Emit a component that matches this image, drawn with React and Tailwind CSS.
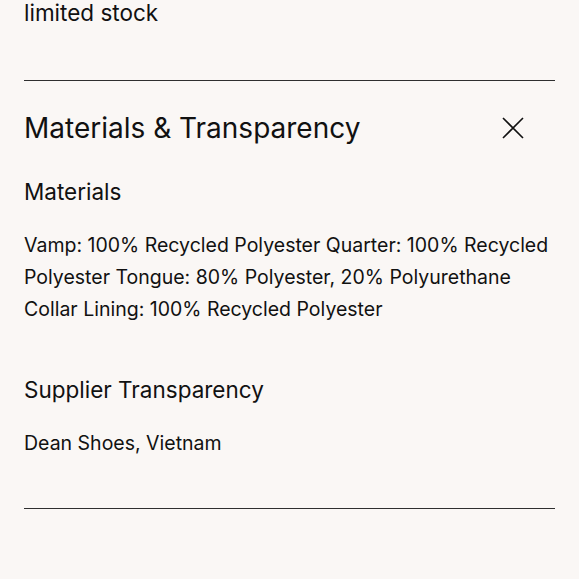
export default function App() {
  return (
    <div
      className="min-h-[580px] w-full bg-[#faf7f5] px-6 text-[#111111]"
      style={{ fontFamily: "Inter, 'Liberation Sans', sans-serif" }}
    >
      <p className="-mt-[1.5px] text-[22.5px] leading-[28px]">limited stock</p>

      <div className="mt-[53.5px] border-t border-[#2f2f2f]">
        <div className="flex items-center justify-between pt-[29px]">
          <h2 className="text-[28px] leading-[36px]">Materials &amp; Transparency</h2>
          <button className="mr-[30px] flex h-[24px] w-[24px] items-center justify-center">
            <svg width="22" height="22" viewBox="0 0 22 22" fill="none" stroke="#111" strokeWidth="1.6">
              <path d="M1 1L21 21M21 1L1 21" />
            </svg>
          </button>
        </div>

        <h3 className="mt-[31px] text-[22.5px] leading-[30px]">Materials</h3>
        <p className="mt-[22px] text-[19.5px] leading-[32px]">
          Vamp: 100% Recycled Polyester Quarter: 100% Recycled Polyester Tongue: 80% Polyester, 20% Polyurethane
          Collar Lining: 100% Recycled Polyester
        </p>

        <h3 className="mt-[50px] text-[22.5px] leading-[30px]">Supplier Transparency</h3>
        <p className="mt-[22px] text-[19.5px] leading-[32px]">Dean Shoes, Vietnam</p>

        <div className="mt-[49px] border-t border-[#2f2f2f]" />
      </div>
    </div>
  );
}
